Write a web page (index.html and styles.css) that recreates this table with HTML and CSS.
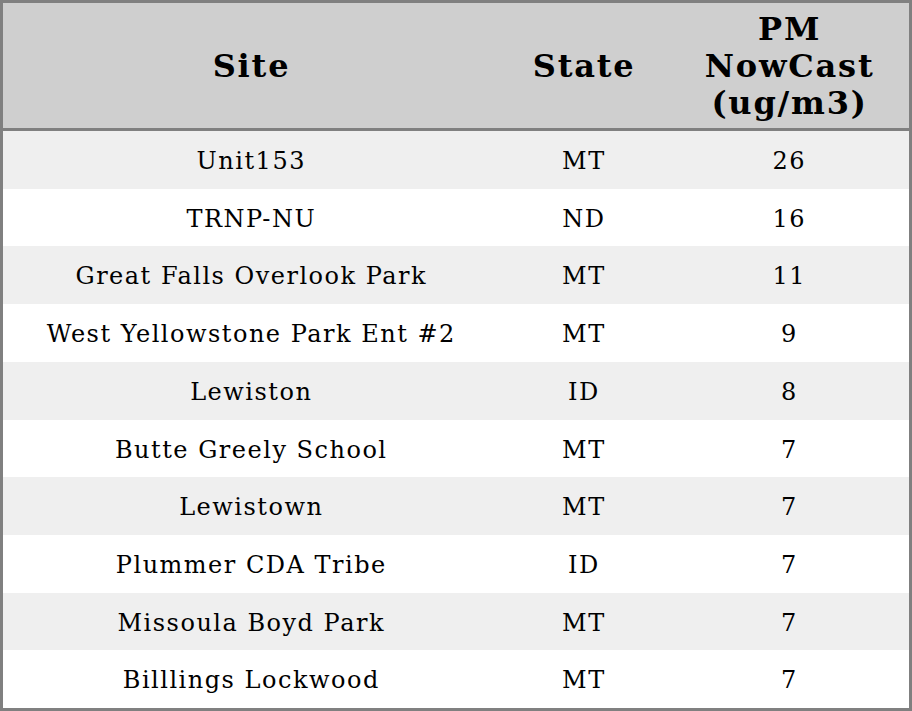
FILE: index.html
```html
<!DOCTYPE html>
<html>
<head>
<meta charset="utf-8">
<link rel="stylesheet" href="styles.css">
</head>
<body>
<table class="aq">
  <colgroup>
    <col class="c-site">
    <col class="c-state">
    <col class="c-pm">
  </colgroup>
  <thead>
    <tr><th>Site</th><th>State</th><th>PM<br>NowCast<br>(ug/m3)</th></tr>
  </thead>
  <tbody>
    <tr><td>Unit153</td><td>MT</td><td>26</td></tr>
    <tr><td>TRNP-NU</td><td>ND</td><td>16</td></tr>
    <tr><td>Great Falls Overlook Park</td><td>MT</td><td>11</td></tr>
    <tr><td>West Yellowstone Park Ent #2</td><td>MT</td><td>9</td></tr>
    <tr><td>Lewiston</td><td>ID</td><td>8</td></tr>
    <tr><td>Butte Greely School</td><td>MT</td><td>7</td></tr>
    <tr><td>Lewistown</td><td>MT</td><td>7</td></tr>
    <tr><td>Plummer CDA Tribe</td><td>ID</td><td>7</td></tr>
    <tr><td>Missoula Boyd Park</td><td>MT</td><td>7</td></tr>
    <tr><td>Billlings Lockwood</td><td>MT</td><td>7</td></tr>
  </tbody>
</table>
</body>
</html>
```
FILE: styles.css
```css
html, body {
  margin: 0;
  padding: 0;
  background: #ffffff;
}
.aq {
  width: 912px;
  border-collapse: collapse;
  border: 3px solid #808080;
  font-family: "DejaVu Serif", serif;
  color: #000;
  table-layout: fixed;
}
.c-site { width: 496px; }
.c-state { width: 170px; }
.c-pm { width: 242px; }
.aq th {
  background: #cfcfcf;
  font-weight: bold;
  font-size: 32px;
  letter-spacing: 1.8px;
  line-height: 37px;
  padding: 8px 0 6px 2px;
  text-align: center;
  border-bottom: 3px solid #808080;
}
.aq td {
  font-size: 24px;
  letter-spacing: 1.5px;
  line-height: 27.7px;
  padding: 17px 0 13px 1.5px;
  text-align: center;
}
.aq tbody tr:nth-child(odd) td { background: #efefef; }
.aq tbody tr:nth-child(even) td { background: #ffffff; }
```
